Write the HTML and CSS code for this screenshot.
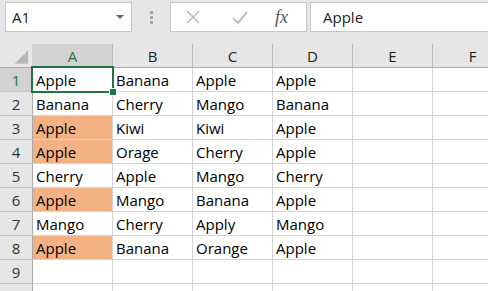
FILE: index.html
```html
<!DOCTYPE html>
<html lang="en">
<head>
    <meta charset="UTF-8">
    <meta name="viewport" content="width=device-width, initial-scale=1.0">
    <title>Sheet</title>
    <link rel="stylesheet" href="styles.css">
</head>
<body>
    <div class="formula-bar">
        <div class="name-box">
            <span>A1</span>
            <svg class="drop" width="8" height="5" viewBox="0 0 8 5"><path d="M0 0H8L4 4Z" fill="#666"/></svg>
        </div>
        <div class="dots"><i></i><i></i><i></i></div>
        <div class="buttons">
            <svg width="16" height="16" viewBox="0 0 16 16"><path d="M2 2L14 14M14 2L2 14" stroke="#bdbdbd" stroke-width="1.6" fill="none"/></svg>
            <svg width="18" height="16" viewBox="0 0 18 16"><path d="M2 9L7 14L16 3" stroke="#bdbdbd" stroke-width="2" fill="none"/></svg>
            <span class="fx">fx</span>
        </div>
        <div class="formula-input">Apple</div>
    </div>

    <div class="sheet">
        <div class="grid">
            <div class="corner"><svg width="33" height="24" viewBox="0 0 33 24"><path d="M29 6V20H15Z" fill="#b8b8b8"/></svg></div>
            <div class="col-head active">A</div>
            <div class="col-head">B</div>
            <div class="col-head">C</div>
            <div class="col-head">D</div>
            <div class="col-head">E</div>
            <div class="col-head">F</div>

            <div class="row-head active">1</div>
            <div class="cell">Apple</div><div class="cell">Banana</div><div class="cell">Apple</div><div class="cell">Apple</div><div class="cell"></div><div class="cell"></div>

            <div class="row-head">2</div>
            <div class="cell">Banana</div><div class="cell">Cherry</div><div class="cell">Mango</div><div class="cell">Banana</div><div class="cell"></div><div class="cell"></div>

            <div class="row-head">3</div>
            <div class="cell dup">Apple</div><div class="cell">Kiwi</div><div class="cell">Kiwi</div><div class="cell">Apple</div><div class="cell"></div><div class="cell"></div>

            <div class="row-head">4</div>
            <div class="cell dup">Apple</div><div class="cell">Orage</div><div class="cell">Cherry</div><div class="cell">Apple</div><div class="cell"></div><div class="cell"></div>

            <div class="row-head">5</div>
            <div class="cell">Cherry</div><div class="cell">Apple</div><div class="cell">Mango</div><div class="cell">Cherry</div><div class="cell"></div><div class="cell"></div>

            <div class="row-head">6</div>
            <div class="cell dup">Apple</div><div class="cell">Mango</div><div class="cell">Banana</div><div class="cell">Apple</div><div class="cell"></div><div class="cell"></div>

            <div class="row-head">7</div>
            <div class="cell">Mango</div><div class="cell">Cherry</div><div class="cell">Apply</div><div class="cell">Mango</div><div class="cell"></div><div class="cell"></div>

            <div class="row-head">8</div>
            <div class="cell dup">Apple</div><div class="cell">Banana</div><div class="cell">Orange</div><div class="cell">Apple</div><div class="cell"></div><div class="cell"></div>

            <div class="row-head">9</div>
            <div class="cell"></div><div class="cell"></div><div class="cell"></div><div class="cell"></div><div class="cell"></div><div class="cell"></div>

            <div class="row-head">10</div>
            <div class="cell"></div><div class="cell"></div><div class="cell"></div><div class="cell"></div><div class="cell"></div><div class="cell"></div>
        </div>
        <div class="selection"><div class="handle"></div></div>
    </div>
</body>
</html>
```

FILE: styles.css
```css
body {
    margin: 0;
    padding: 0;
    width: 488px;
    height: 291px;
    overflow: hidden;
    background: #fff;
    font-family: "Open Sans", "Liberation Sans", sans-serif;
    font-size: 15px;
    color: #000;
}
.formula-bar {
    height: 44px;
    background: #e6e6e6;
    display: flex;
    align-items: flex-start;
    padding-top: 2px;
    box-sizing: border-box;
}
.name-box {
    margin-left: 5px;
    width: 127px;
    height: 30px;
    box-sizing: border-box;
    background: #fff;
    border: 1px solid #c6c6c6;
    display: flex;
    align-items: center;
    justify-content: space-between;
    padding: 0 7px 0 6px;
    color: #222;
}
.drop {
    margin-top: 1px;
}
.dots {
    width: 38px;
    height: 30px;
    display: flex;
    flex-direction: column;
    align-items: center;
    justify-content: center;
    gap: 2px;
}
.dots i {
    display: block;
    width: 3px;
    height: 3px;
    background: #a6a6a6;
}
.buttons {
    width: 137px;
    height: 30px;
    box-sizing: border-box;
    background: #fff;
    border: 1px solid #c6c6c6;
    display: flex;
    align-items: center;
    padding-left: 14px;
    gap: 30px;
}
.fx {
    font-family: "Liberation Serif", serif;
    font-style: italic;
    font-size: 18px;
    color: #555;
    margin-left: -4px;
}
.formula-input {
    margin-left: 3px;
    flex: 1;
    height: 30px;
    box-sizing: border-box;
    background: #fff;
    border: 1px solid #c6c6c6;
    border-right: none;
    display: flex;
    align-items: center;
    padding-left: 12px;
    color: #222;
}
.sheet {
    position: relative;
}
.grid {
    display: grid;
    grid-template-columns: 33px repeat(6, 80px);
    grid-auto-rows: 24px;
}
.grid > div {
    box-sizing: border-box;
    border-right: 1px solid #d4d4d4;
    border-bottom: 1px solid #d4d4d4;
    display: flex;
    align-items: center;
    white-space: nowrap;
}
.corner {
    background: #e6e6e6;
}
.grid > .corner,
.grid > .col-head {
    border-bottom-color: #ababab;
}
.col-head {
    background: #e6e6e6;
    justify-content: center;
    color: #222;
    padding-top: 1px;
}
.grid > .col-head {
    border-right-color: #bcbcbc;
}
.row-head {
    background: #e6e6e6;
    justify-content: center;
    color: #333;
}
.grid > .row-head {
    border-right-color: #ababab;
    border-bottom-color: #c8c8c8;
}
.col-head.active,
.row-head.active {
    background: #d2d2d2;
    color: #217346;
}
.cell {
    padding-left: 3px;
}
.cell.dup {
    background: #f4b183;
}
.selection {
    position: absolute;
    left: 31px;
    top: 22px;
    width: 83px;
    height: 27px;
    box-sizing: border-box;
    border: 2px solid #217346;
}
.handle {
    position: absolute;
    right: -5px;
    bottom: -5px;
    width: 6px;
    height: 6px;
    background: #217346;
    border: 1px solid #fff;
}
```
